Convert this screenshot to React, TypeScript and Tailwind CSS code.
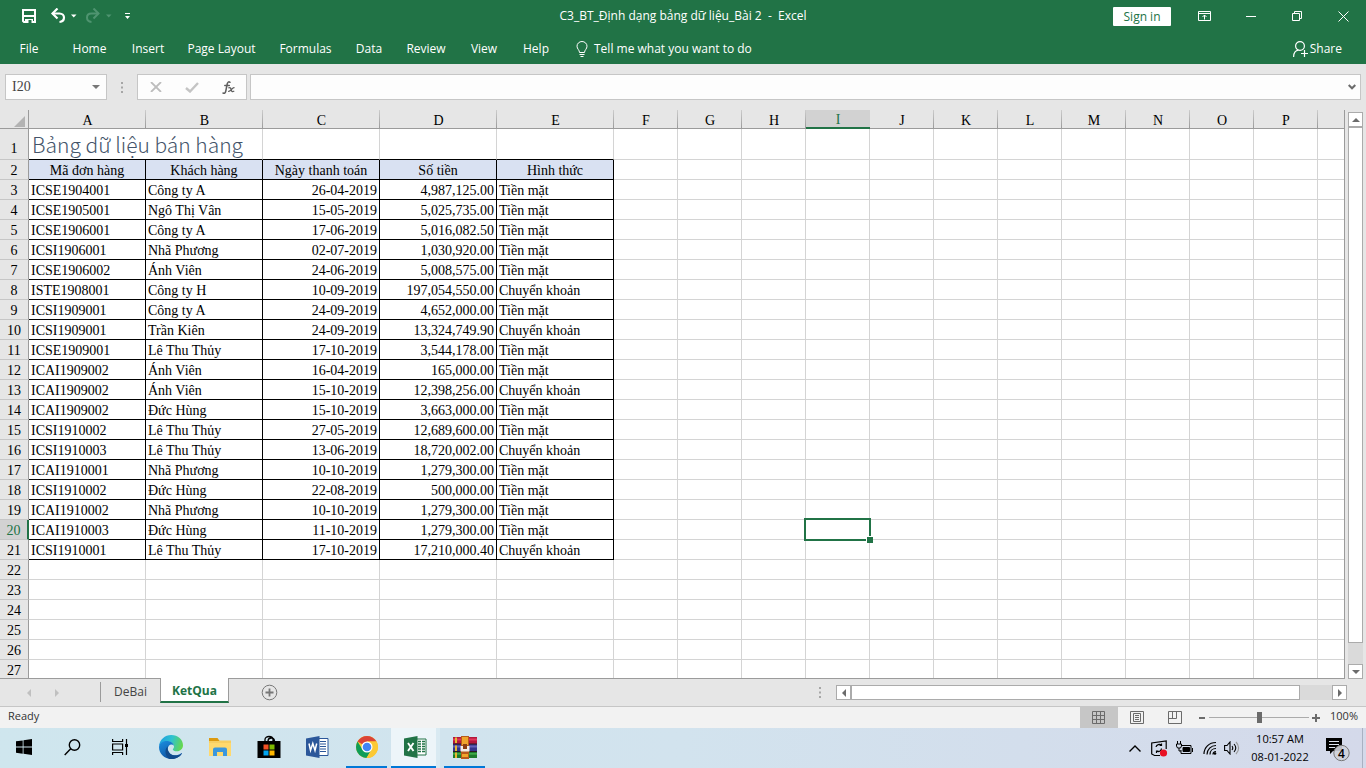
import type { ReactNode } from "react";
import clsx from "clsx";

type Order = [string, string, string, string, string];

const headings = ["Mã đơn hàng", "Khách hàng", "Ngày thanh toán", "Số tiền", "Hình thức"];

const orders: Order[] = [
  ["ICSE1904001", "Công ty A", "26-04-2019", "4,987,125.00", "Tiền mặt"],
  ["ICSE1905001", "Ngô Thị Vân", "15-05-2019", "5,025,735.00", "Tiền mặt"],
  ["ICSE1906001", "Công ty A", "17-06-2019", "5,016,082.50", "Tiền mặt"],
  ["ICSI1906001", "Nhã Phương", "02-07-2019", "1,030,920.00", "Tiền mặt"],
  ["ICSE1906002", "Ánh Viên", "24-06-2019", "5,008,575.00", "Tiền mặt"],
  ["ISTE1908001", "Công ty H", "10-09-2019", "197,054,550.00", "Chuyển khoản"],
  ["ICSI1909001", "Công ty A", "24-09-2019", "4,652,000.00", "Tiền mặt"],
  ["ICSI1909001", "Trần Kiên", "24-09-2019", "13,324,749.90", "Chuyển khoản"],
  ["ICSE1909001", "Lê Thu Thủy", "17-10-2019", "3,544,178.00", "Tiền mặt"],
  ["ICAI1909002", "Ánh Viên", "16-04-2019", "165,000.00", "Tiền mặt"],
  ["ICAI1909002", "Ánh Viên", "15-10-2019", "12,398,256.00", "Chuyển khoản"],
  ["ICAI1909002", "Đức Hùng", "15-10-2019", "3,663,000.00", "Tiền mặt"],
  ["ICSI1910002", "Lê Thu Thủy", "27-05-2019", "12,689,600.00", "Tiền mặt"],
  ["ICSI1910003", "Lê Thu Thủy", "13-06-2019", "18,720,002.00", "Chuyển khoản"],
  ["ICAI1910001", "Nhã Phương", "10-10-2019", "1,279,300.00", "Tiền mặt"],
  ["ICSI1910002", "Đức Hùng", "22-08-2019", "500,000.00", "Tiền mặt"],
  ["ICAI1910002", "Nhã Phương", "10-10-2019", "1,279,300.00", "Tiền mặt"],
  ["ICAI1910003", "Đức Hùng", "11-10-2019", "1,279,300.00", "Tiền mặt"],
  ["ICSI1910001", "Lê Thu Thủy", "17-10-2019", "17,210,000.40", "Chuyển khoản"],
];

const columns = "ABCDEFGHIJKLMNOP".split("");
const ROWS = 27;
const ACTIVE_COL = 8;
const ACTIVE_ROW = 20;

const tabs = [
  { name: "File", cls: "w-[58px]" },
  { name: "Home", cls: "w-[63px]" },
  { name: "Insert", cls: "w-[54px]" },
  { name: "Page Layout", cls: "w-[93px]" },
  { name: "Formulas", cls: "w-[75px]" },
  { name: "Data", cls: "w-[52px]" },
  { name: "Review", cls: "w-[62px]" },
  { name: "View", cls: "w-[54px]" },
  { name: "Help", cls: "w-[50px]" },
];

function TitleBar() {
  return (
    <div className="flex h-8 items-center">
      <div className="flex flex-1 items-center">
        <button type="button" aria-label="Save" className="ml-5 w-[30px]">
          <svg width="17" height="16" viewBox="0 0 17 16" fill="none">
            <path d="M3 2h12v12H4l-1-1z" stroke="#fff" strokeWidth="2" />
            <path d="M3 8h12" stroke="#fff" strokeWidth="2" />
            <path d="M5 11h8v4H5z" fill="#fff" />
            <path d="M8.500 12h3v3h-3z" fill="#217346" />
          </svg>
        </button>
        <button type="button" aria-label="Undo" className="w-[35px]">
          <svg width="28" height="16" viewBox="0 0 28 16" fill="none">
            <path d="M2.500 5.500h7c6 0 6 8 0 8.500" stroke="#fff" strokeWidth="2.200" />
            <path d="M7.500 0.500l-5 5 5 5" stroke="#fff" strokeWidth="2.200" />
            <path d="M21 6.500h5.500L23.750 9.500z" fill="#fff" />
          </svg>
        </button>
        <button type="button" aria-label="Redo" className="w-[38px]">
          <svg width="28" height="16" viewBox="0 0 28 16" fill="none">
            <path d="M13.500 5.500h-7c-6 0-6 8 0 8.500" stroke="#4f9470" strokeWidth="2" />
            <path d="M8.500 0.500l5 5-5 5" stroke="#4f9470" strokeWidth="2" />
            <path d="M21 6.500h5.500L23.750 9.500z" fill="#4f9470" />
          </svg>
        </button>
        <button type="button" aria-label="Customize Quick Access Toolbar">
          <svg width="9" height="8" viewBox="0 0 9 8">
            <path d="M2 1h5v1H2zM2 4h5L4.500 7z" fill="#fff" />
          </svg>
        </button>
      </div>
      <div className="text-xs whitespace-pre">C3_BT_Định dạng bảng dữ liệu_Bài 2  -  Excel</div>
      <div className="flex flex-1 items-center justify-end">
        <button type="button" className="mr-[26px] h-[19px] w-[58px] rounded-[1px] bg-white text-xs leading-[19px] text-[#217346]">
          Sign in
        </button>
        <button type="button" aria-label="Ribbon Display Options" className="flex w-[45px] justify-start">
          <svg width="15" height="12" viewBox="0 0 15 12" fill="none" stroke="#fff">
            <path d="M1.500 1.500h12v9h-12zM1.500 3.500h12M7.500 9.500V5M5.500 7l2-2 2 2" />
          </svg>
        </button>
        <button type="button" aria-label="Minimize" className="flex w-[46px] justify-start pl-1">
          <svg width="10" height="10" viewBox="0 0 10 10" stroke="#fff">
            <path d="M0 5.500h10" />
          </svg>
        </button>
        <button type="button" aria-label="Restore" className="flex w-[46px] justify-start pl-1">
          <svg width="11" height="11" viewBox="0 0 11 11" fill="none" stroke="#fff">
            <path d="M0.500 2.500h7v7h-7zM2.500 2.500v-2h7v7h-2" />
          </svg>
        </button>
        <button type="button" aria-label="Close" className="flex w-[32px] justify-start pl-1">
          <svg width="11" height="11" viewBox="0 0 11 11" stroke="#fff">
            <path d="M0.500 0.500l10 10M10.500 0.500l-10 10" />
          </svg>
        </button>
      </div>
    </div>
  );
}

function Ribbon() {
  return (
    <nav className="flex h-8 items-center pt-0.5 text-xs">
      {tabs.map((tab) => (
        <button key={tab.name} type="button" className={clsx("text-center whitespace-nowrap", tab.cls)}>
          {tab.name}
        </button>
      ))}
      <button type="button" className="ml-[15px] flex items-center gap-1.5 whitespace-nowrap">
        <svg width="12" height="16" viewBox="0 0 12 16" fill="none" stroke="#fff">
          <path d="M3.500 11.500C3.500 9 1 8 1 5.200a5 4.700 0 0 1 10 0C11 8 8.500 9 8.500 11.500zM3.500 13.500h5M4.500 15.500h3" />
        </svg>
        Tell me what you want to do
      </button>
      <button type="button" className="mr-6 ml-auto flex items-center gap-0.5">
        <svg width="15" height="16" viewBox="0 0 15 16" fill="none" stroke="#fff" strokeWidth="1.200">
          <circle cx="7" cy="5" r="4.400" />
          <path d="M0.600 16c0-4 2-6.500 5-6.800M8 12.500h7M11.500 9v7" />
        </svg>
        Share
      </button>
    </nav>
  );
}

function Dots({ className }: { className?: string }) {
  return (
    <svg className={className} width="2" height="11" viewBox="0 0 2 11" fill="#a6a6a6">
      <path d="M0 0h2v2H0zM0 4.500h2v2H0zM0 9h2v2H0z" />
    </svg>
  );
}

function FormulaBar() {
  return (
    <div className="flex px-[5px] pt-[10px] pb-[10px]">
      <div className="flex h-[26px] w-[102px] items-center border border-[#c6c6c6] bg-[#fdfdfd] pr-1.5">
        <input
          aria-label="Name Box"
          defaultValue="I20"
          className="w-full min-w-0 bg-transparent pl-1.5 font-['Liberation_Serif',serif] text-sm text-[#444] outline-none"
        />
        <svg width="8" height="4" viewBox="0 0 8 4" className="shrink-0">
          <path d="M0 0h8L4 4z" fill="#777" />
        </svg>
      </div>
      <Dots className="mx-[14px] self-center" />
      <div className="flex h-[26px] w-[110px] items-center justify-around border border-[#c6c6c6] bg-[#fdfdfd]">
        <button type="button" aria-label="Cancel">
          <svg width="12" height="10" viewBox="0 0 12 10" stroke="#bdbdbd" strokeWidth="1.800">
            <path d="M1 0l10 10M11 0L1 10" />
          </svg>
        </button>
        <button type="button" aria-label="Enter">
          <svg width="14" height="11" viewBox="0 0 14 11" fill="none" stroke="#c4c4c4" strokeWidth="2.400">
            <path d="M1 6l4 3.500L13 1" />
          </svg>
        </button>
        <button type="button" aria-label="Insert Function">
          <svg width="13" height="13" viewBox="0 0 13 13" fill="none" stroke="#5f5f5f" strokeLinecap="round">
            <path d="M8 1.300C6.800 0.300 5.600 1 5.200 3L3.800 10c-.4 2-1.500 2.700-2.800 2M2.800 4.500h4.500" strokeWidth="1.500" />
            <path d="M6.800 6.800c1.700-.6 2 .5 2.400 2s1 2.400 2.600 1.500M12 6.700c-1.600-.2-3.400 3.800-5.400 3.700" strokeWidth="1.300" />
          </svg>
        </button>
      </div>
      <div className="ml-[3px] flex h-[26px] flex-1 items-center border border-[#c6c6c6] bg-[#fdfdfd] pr-1">
        <input aria-label="Formula Bar" className="w-full min-w-0 bg-transparent px-2 text-sm outline-none" />
        <svg width="8" height="6" viewBox="0 0 8 6" fill="none" stroke="#6b6b6b" strokeWidth="2" className="shrink-0">
          <path d="M0.700 1L4 4.300 7.300 1" />
        </svg>
      </div>
    </div>
  );
}

function cellText(row: number, col: number) {
  if (row === 1) return col === 0 ? "Bảng dữ liệu bán hàng" : "";
  if (row === 2) return headings[col] ?? "";
  return orders[row - 3]?.[col] ?? "";
}

function Sheet() {
  return (
    <div className="min-w-0 flex-1 overflow-hidden border-r border-b border-[#9b9b9b] bg-white">
      <table className="w-full table-fixed border-separate border-spacing-0 font-['Liberation_Serif',serif] text-sm leading-[17px] text-black">
        <colgroup>
          <col className="w-[29px]" />
          {columns.map((c, i) => (
            <col key={c} className={i < 5 ? "w-[117px]" : "w-16"} />
          ))}
          <col />
        </colgroup>
        <thead>
          <tr className="h-[19px]">
            <th className="border-r border-b border-[#9b9b9b] bg-[#e6e6e6] p-0">
              <svg className="mt-1 ml-auto mr-[3px]" width="11" height="11" viewBox="0 0 11 11">
                <path d="M11 0v11H0z" fill="#b3b3b3" />
              </svg>
            </th>
            {columns.map((c, i) => (
              <th
                key={c}
                className={clsx(
                  "p-0 pt-[3px] font-normal",
                  i === ACTIVE_COL
                    ? "border-b-2 border-[#217346] bg-[#d2d2d2] leading-[14px] text-[#217346]"
                    : "border-b border-[#9b9b9b] bg-[#e6e6e6] bg-[linear-gradient(#cccccc,#9b9b9b)] bg-[length:1px_100%] bg-right bg-no-repeat leading-[15px]"
                )}
              >
                {c}
              </th>
            ))}
            <th className="border-b border-[#9b9b9b] bg-[#e6e6e6] p-0" />
          </tr>
        </thead>
        <tbody>
          {Array.from({ length: ROWS }, (_, r) => r + 1).map((row) => (
            <tr key={row} className={row === 1 ? "h-[31px]" : "h-5"}>
              <th
                className={clsx(
                  "border-b border-b-[#c6c6c6] p-0 text-center font-normal",
                  row === 1 ? "pb-0.5 align-bottom" : "pt-0.5",
                  row === ACTIVE_ROW
                    ? "border-r-2 border-r-[#217346] bg-[#d2d2d2] text-[#217346]"
                    : "border-r border-r-[#9b9b9b] bg-[#e6e6e6]"
                )}
              >
                {row}
              </th>
              {columns.map((c, i) => {
                const boxed = row <= 21 && i < 5;
                return (
                  <td
                    key={c}
                    className={clsx(
                      "relative border-b p-0 whitespace-nowrap",
                      boxed ? "border-b-black" : "border-b-[#d4d4d4]",
                      boxed && row > 1 ? "border-r-black" : "border-r-[#d4d4d4]",
                      row === 1 && i === 0
                        ? "px-[3px] font-['Noto_Sans_CJK_SC','Open_Sans',sans-serif] text-[21px] leading-[29px] font-light text-[#44546a]"
                        : "border-r px-0.5 pt-0.5",
                      row === 2 && i < 5 && "bg-[#d9e1f2] text-center",
                      row > 2 && (i === 2 || i === 3) && "text-right"
                    )}
                  >
                    {cellText(row, i)}
                    {row === ACTIVE_ROW && i === ACTIVE_COL && (
                      <span className="absolute -inset-0.5 z-10 border-2 border-[#217346]">
                        <span className="absolute -right-1 -bottom-1 size-[7px] border-t border-l border-white bg-[#217346]" />
                      </span>
                    )}
                  </td>
                );
              })}
              <td className="border-b border-[#d4d4d4] p-0" />
            </tr>
          ))}
        </tbody>
      </table>
    </div>
  );
}

function ArrowButton({ label, d }: { label: string; d: string }) {
  return (
    <button
      type="button"
      aria-label={label}
      className="flex size-[15px] shrink-0 items-center justify-center border border-[#ababab] bg-white"
    >
      <svg width="8" height="8" viewBox="0 0 8 8">
        <path d={d} fill="#6b6b6b" />
      </svg>
    </button>
  );
}

function SheetTabs() {
  return (
    <div className="flex h-7 shrink-0 border-b border-[#c6c6c6] text-xs">
      <div className="flex w-[100px] items-center gap-6 pl-[27px]">
        <svg width="4" height="8" viewBox="0 0 4 8">
          <path d="M4 0v8L0 4z" fill="#c0c0c0" />
        </svg>
        <svg width="4" height="8" viewBox="0 0 4 8">
          <path d="M0 0v8l4-4z" fill="#c0c0c0" />
        </svg>
      </div>
      <span className="mt-[3px] h-5 w-px bg-[#9b9b9b]" />
      <button type="button" className="h-[25px] w-[59px] text-[#444]">
        DeBai
      </button>
      <button
        type="button"
        className="relative -mt-px h-[25px] w-[69px] border-x border-b-2 border-x-[#9b9b9b] border-b-[#217346] bg-white pt-[3px] font-bold text-[#217346]"
      >
        KetQua
      </button>
      <button type="button" aria-label="New sheet" className="ml-8 self-center">
        <svg width="17" height="17" viewBox="0 0 17 17" fill="none" stroke="#777">
          <circle cx="8.500" cy="8.500" r="7.300" />
          <path d="M8.500 4.500v8M4.500 8.500h8" strokeWidth="1.800" />
        </svg>
      </button>
      <Dots className="mr-[15px] ml-auto self-center" />
      <div className="mt-[6px] mr-[19px] flex h-[15px] w-[511px]">
        <ArrowButton label="Scroll left" d="M6 0v8L2 4z" />
        <div className="flex flex-1 bg-[#dadada]">
          <div className="w-[449px] border border-[#ababab] bg-white" />
        </div>
        <ArrowButton label="Scroll right" d="M2 0v8l4-4z" />
      </div>
    </div>
  );
}

function StatusBar() {
  return (
    <div className="flex h-[21px] shrink-0 items-center bg-[#f2f2f2] pl-2 text-[11px] text-[#333]">
      <span className="pb-0.5">Ready</span>
      <div className="ml-auto flex h-full">
        <button type="button" aria-label="Normal" className="flex w-[38px] items-center justify-center bg-[#c6c6c6]">
          <svg width="14" height="13" viewBox="0 0 14 13" fill="none" stroke="#6b6b6b">
            <path d="M0.500 0.500h12v12h-12zM0.500 4.500h12M0.500 8.500h12M4.500 0v13M8.500 0v13" />
          </svg>
        </button>
        <button type="button" aria-label="Page Layout" className="flex w-[38px] items-center justify-center">
          <svg width="14" height="13" viewBox="0 0 14 13" fill="none" stroke="#6b6b6b">
            <path d="M0.500 0.500h13v12h-13zM3.500 2.500h7v8h-7zM5 4.500h4M5 6.500h4M5 8.500h4" />
          </svg>
        </button>
        <button type="button" aria-label="Page Break Preview" className="flex w-[38px] items-center justify-center">
          <svg width="14" height="13" viewBox="0 0 14 13" fill="none" stroke="#6b6b6b">
            <path d="M0.500 0.500h13v12h-13zM0.500 7.500h8v-7M4.500 0v7.500" />
          </svg>
        </button>
      </div>
      <button type="button" aria-label="Zoom out" className="mr-1 ml-[5px]">
        <svg width="6" height="2" viewBox="0 0 6 2">
          <path d="M0 0h6v2H0z" fill="#6b6b6b" />
        </svg>
      </button>
      <input
        type="range"
        aria-label="Zoom"
        min={10}
        max={190}
        defaultValue={100}
        className="h-[11px] w-[100px] appearance-none bg-[linear-gradient(#ababab,#ababab)] bg-[length:100%_1px] bg-center bg-no-repeat [&::-webkit-slider-thumb]:h-[11px] [&::-webkit-slider-thumb]:w-[5px] [&::-webkit-slider-thumb]:appearance-none [&::-webkit-slider-thumb]:bg-[#6b6b6b]"
      />
      <button type="button" aria-label="Zoom in" className="ml-[3px]">
        <svg width="8" height="8" viewBox="0 0 8 8">
          <path d="M3 0h2v3h3v2H5v3H3V5H0V3h3z" fill="#6b6b6b" />
        </svg>
      </button>
      <span className="w-[46px] pr-2 pb-0.5 text-right">100%</span>
    </div>
  );
}

function TaskItem({ label, open, active, wide, children }: { label: string; open?: boolean; active?: boolean; wide?: boolean; children: ReactNode }) {
  return (
    <button
      type="button"
      aria-label={label}
      className={clsx(
        "relative flex h-10 items-center justify-center pb-0.5",
        wide ? "w-[49px]" : "w-12",
        active && "border-r-4 border-[#d9eaf2] bg-[#edf5f9] pl-1"
      )}
    >
      {children}
      {open && (
        <span className={clsx("absolute bottom-0 h-0.5 bg-[#0078d7]", active ? "inset-x-0" : "inset-x-1")} />
      )}
    </button>
  );
}

function Taskbar() {
  return (
    <footer className="flex h-10 shrink-0 items-center bg-linear-to-r from-[#cfe6ee] via-[#d2e3ee] to-[#d4d9ea] text-black">
      <TaskItem label="Start">
        <svg width="16" height="16" viewBox="0 0 16 16">
          <path d="M0 2.300L6.700 1.400v6.200H0zM7.500 1.200L16 0v7.600H7.500zM0 8.400h6.700v6.300L0 13.700zM7.500 8.400H16V16l-8.500-1.200z" />
        </svg>
      </TaskItem>
      <TaskItem label="Search">
        <svg width="17" height="17" viewBox="0 0 17 17" fill="none" stroke="#000" strokeWidth="1.400">
          <circle cx="10.500" cy="6" r="5.200" />
          <path d="M6.700 9.700L0.700 16" />
        </svg>
      </TaskItem>
      <TaskItem label="Task View">
        <svg width="17" height="16" viewBox="0 0 17 16" fill="none" stroke="#000" strokeWidth="1.200">
          <path d="M0.600 0v2.500h10V0M0.600 16v-2.500h10V16M0.600 5h10v6h-10zM14.500 0v16" />
          <path d="M13 5h3v3h-3z" fill="#000" stroke="none" />
        </svg>
      </TaskItem>
      <div className="w-[3px]" />
      <TaskItem label="Microsoft Edge">
        <svg width="24" height="24" viewBox="0 0 24 24">
          <defs>
            <linearGradient id="edgeTop" x1="0" y1="0.300" x2="1" y2="0.500">
              <stop offset="0" stopColor="#1f9fe0" />
              <stop offset="0.500" stopColor="#2fc2d0" />
              <stop offset="1" stopColor="#66d84c" />
            </linearGradient>
            <linearGradient id="edgeLow" x1="0" y1="0" x2="0.600" y2="1">
              <stop offset="0" stopColor="#1b8fe0" />
              <stop offset="1" stopColor="#0c4d9c" />
            </linearGradient>
          </defs>
          <path d="M0 11.500C0.500 4.500 6 0 12.200 0 19 0 24 4.800 24 10.300c0 3.600-2.800 6-6 6-2.600 0-4.200-1-4.200-1.800 0-.7 1.200-1.200 1.200-3C15 8.500 12 6.500 8.500 6.500 4 6.500 1 9 0 11.500z" fill="url(#edgeTop)" />
          <path d="M0 12C0.300 8.500 3.500 6 7.500 6c4 0 7 2 7.400 4.800-1.200-1.500-3.600-1.600-5-.1-1.800 2-1.400 5.500 1 7.700 3 2.700 8 2.400 11.300-.2.500-.3 1 0 .7.500C20.800 21.800 16.800 24 12.300 24 5.500 24 0 18.700 0 12z" fill="url(#edgeLow)" />
          <path d="M9 10.900c-3.500 3-3.700 9.500 1.500 13C16 24.500 20.500 22 22.500 19c-3.800 2.400-9 1.700-11.600-.6C8.600 16.300 8.200 13 9 10.900z" fill="#114a8b" />
        </svg>
      </TaskItem>
      <TaskItem label="File Explorer" wide>
        <svg width="22" height="20" viewBox="0 0 22 20">
          <path d="M0 1.500h8.500l1.500 2H22V19H0z" fill="#f7cf63" />
          <path d="M0 1h8.500L10.500 4H0z" fill="#dc9a10" />
          <path d="M0 6h22v13H0z" fill="#ffd96e" />
          <path d="M4 19v-6.500a2 2 0 0 1 2-2h10a2 2 0 0 1 2 2V19h-4v-4H8v4z" fill="#3b97dd" />
        </svg>
      </TaskItem>
      <TaskItem label="Microsoft Store" wide>
        <svg width="24" height="24" viewBox="0 0 24 24">
          <path d="M0.500 6h23v17h-23z" />
          <path d="M8 7V4.500C8 0.500 16 0.500 16 4.500V7M11 6C11 2.500 17 1.500 17.500 6" fill="none" stroke="#000" strokeWidth="1.300" />
          <path d="M6.500 9.500h5v5h-5z" fill="#f25022" />
          <path d="M12.500 9.500h5v5h-5z" fill="#7fba00" />
          <path d="M6.500 15.500h5v5h-5z" fill="#00a4ef" />
          <path d="M12.500 15.500h5v5h-5z" fill="#ffb900" />
        </svg>
      </TaskItem>
      <TaskItem label="Word" wide>
        <svg width="23" height="22" viewBox="0 0 23 22">
          <path d="M12 2.500h10v17H12z" fill="#fff" stroke="#2b579a" />
          <path d="M14 5.500h6M14 8h6M14 10.500h6M14 13h6M14 15.500h6" stroke="#2b579a" strokeWidth="1.200" />
          <path d="M0 2.500L13.500 0v22L0 19.500z" fill="#2b579a" />
          <path d="M3 7.500l1.500 7 2.300-7 2.200 7 1.700-7" fill="none" stroke="#fff" strokeWidth="1.500" />
        </svg>
      </TaskItem>
      <TaskItem label="Chrome" open wide>
        <svg width="24" height="24" viewBox="0 0 24 24">
          <circle cx="12" cy="12" r="11" fill="#fcc934" />
          <path d="M12 12L2.500 6.500A11 11 0 0 1 21.500 6.500H12z" fill="#db4437" />
          <path d="M2.500 6.500A11 11 0 0 0 11.500 23L16.500 14.500 12 17 7.500 14.500z" fill="#0f9d58" />
          <path d="M12 6.500h9.500A11 11 0 0 1 11.500 23L17 14z" fill="#fcc934" />
          <circle cx="12" cy="12" r="5.500" fill="#fff" />
          <circle cx="12" cy="12" r="4.300" fill="#4285f4" />
        </svg>
      </TaskItem>
      <TaskItem label="Excel" open active wide>
        <svg width="23" height="22" viewBox="0 0 23 22">
          <path d="M12 3h10v16H12z" fill="#fff" stroke="#217346" />
          <path d="M14 5.500h3M14 8h3M14 10.500h3M14 13h3M14 15.500h3M18 5.500h3M18 8h3M18 10.500h3M18 13h3M18 15.500h3" stroke="#217346" strokeWidth="1.300" />
          <path d="M0 2.500L13.500 0v22L0 19.500z" fill="#217346" />
          <path d="M4 7l5.500 8M9.500 7L4 15" stroke="#fff" strokeWidth="1.900" />
        </svg>
      </TaskItem>
      <TaskItem label="WinRAR" open wide>
        <svg width="24" height="23" viewBox="0 0 24 23">
          <path d="M0 1h24v7H0z" fill="#b3173b" />
          <path d="M0 2.500h24v2H0z" fill="#e0375b" />
          <path d="M0 8h24v7.500H0z" fill="#34348c" />
          <path d="M0 9.500h24v2H0z" fill="#6262b8" />
          <path d="M0 15.500h24V22H0z" fill="#1c7a2c" />
          <path d="M0 17h24v1.700H0z" fill="#3faa48" />
          <path d="M0 7.500h24v1H0zM0 15h24v1H0z" fill="#2a1a22" />
          <path d="M2 1.500h2v5.500H2zM2 9.500h2V15H2zM2 16.500h2V22H2z" fill="#e8b830" />
          <path d="M8 0h8v23H8z" fill="#b85a1c" />
          <path d="M9 1h6v8H9zM9 18h6v3H9z" fill="#efa52c" />
          <path d="M7.500 10h9v5.500h-9z" fill="#f3eee6" />
          <path d="M10 8h4v5h-4z" fill="#8b3d12" />
        </svg>
      </TaskItem>

      <div className="ml-auto flex items-center">
        <button type="button" aria-label="Show hidden icons" className="mr-[10px]">
          <svg width="12" height="7" viewBox="0 0 12 7" fill="none" stroke="#000" strokeWidth="1.400">
            <path d="M0.500 6.500L6 1l5.500 5.500" />
          </svg>
        </button>
        <svg className="mr-2" width="17" height="17" viewBox="0 0 17 17" fill="none" stroke="#000" strokeWidth="1.200">
          <path d="M9 15.500H3.500L0.700 14V3l14.500-2v8" />
          <path d="M5 7a3.200 3.200 0 0 1 5.500-1.500M10.500 3.500v2H8.500M10.500 8.500A3.200 3.200 0 0 1 5.500 11M5.500 13v-2h2" />
          <circle cx="12.500" cy="13" r="3.600" fill="#e81123" stroke="none" />
        </svg>
        <svg className="mr-[10px]" width="17" height="15" viewBox="0 0 17 15" fill="none" stroke="#000">
          <path d="M6 4.500h9v8H5V9M3 7v3h2M1.500 0v3M4.500 0v3M0.500 3h5v2l-1 2h-3l-1-2zM16.500 7v4" />
          <path d="M7 6.500h6.500v4H7z" fill="#000" />
        </svg>
        <svg className="mr-[7px]" width="14" height="14" viewBox="0 0 14 14" fill="none" stroke="#000" strokeWidth="1.200">
          <path d="M1 13C1 6.500 6 1.500 13 1.500M4 13.500c0-5 4-9 9-9M7 13.500c0-3.500 2.500-6 6-6M10 13.500c0-1.500 1-3 3-3" />
          <circle cx="12" cy="12.500" r="1.300" fill="#000" stroke="none" />
        </svg>
        <svg className="mr-[10px]" width="16" height="14" viewBox="0 0 16 14" fill="none" stroke="#000" strokeWidth="1.100">
          <path d="M0.600 4.500H3L6 1v12L3 9.500H0.600zM8 5c1 1.300 1 2.700 0 4M10 3c2.300 2.600 2.300 5.400 0 8" />
          <path d="M12 1c3.500 3.500 3.500 8.500 0 12" stroke="#999" />
        </svg>
        <div className="w-[60px] text-center text-[11px] leading-[18px] whitespace-nowrap">
          <div>10:57 AM</div>
          <div>08-01-2022</div>
        </div>
        <button type="button" aria-label="Notifications" className="relative mr-3 ml-4 pt-0.5">
          <svg width="24" height="26" viewBox="0 0 24 26">
            <path d="M0 2h16v13H7l-3 3v-3H0z" />
            <path d="M3 5.500h10M3 8.500h10M3 11.500h6" stroke="#dde3ee" />
            <circle cx="15.500" cy="17" r="7.700" fill="#cfd2da" fillOpacity="0.900" stroke="#777" />
          </svg>
          <span className="absolute top-3 left-3 text-xs leading-4 font-semibold">4</span>
        </button>
        <span className="mr-[3px] h-10 w-px bg-[#a9b1c2]" />
      </div>
    </footer>
  );
}

export default function App() {
  return (
    <div className="flex h-screen flex-col overflow-hidden bg-[#e6e6e6] font-['Open_Sans','Noto_Sans',sans-serif]">
      <header className="shrink-0 bg-[#217346] text-white">
        <TitleBar />
        <Ribbon />
      </header>
      <FormulaBar />
      <main className="flex min-h-0 flex-1">
        <Sheet />
        <div className="flex w-[21px] flex-col pt-0.5 pr-[3px] pl-[3px]">
          <ArrowButton label="Scroll up" d="M0 6h8L4 2z" />
          <div className="flex-1 bg-[#dadada]">
            <div className="h-[96%] border border-[#ababab] bg-white" />
          </div>
          <ArrowButton label="Scroll down" d="M0 2h8L4 6z" />
        </div>
      </main>
      <SheetTabs />
      <StatusBar />
      <Taskbar />
    </div>
  );
}
